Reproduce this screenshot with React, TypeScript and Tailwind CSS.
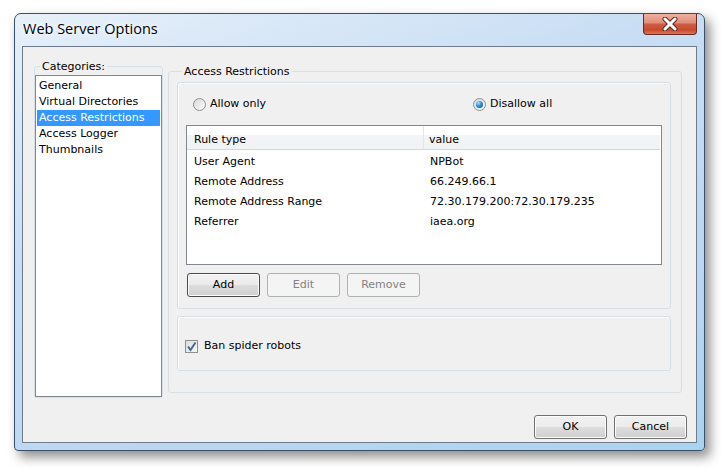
import React from 'react';

const categories = ['General', 'Virtual Directories', 'Access Restrictions', 'Access Logger', 'Thumbnails'];

const rules = [
  { type: 'User Agent', value: 'NPBot' },
  { type: 'Remote Address', value: '66.249.66.1' },
  { type: 'Remote Address Range', value: '72.30.179.200:72.30.179.235' },
  { type: 'Referrer', value: 'iaea.org' },
];

const Radio = ({ checked, label }: { checked?: boolean; label: string }) => (
  <div className="flex items-center h-[14px]">
    <span className="w-[13px] h-[13px] rounded-full border border-[#8e8f8f] bg-gradient-to-br from-[#d9d9d9] to-[#fbfbfb] flex items-center justify-center">
      {checked && (
        <span className="w-[7px] h-[7px] rounded-full bg-[radial-gradient(circle_at_35%_30%,#a9dcff_0%,#2b8ee0_45%,#0b3f86_100%)]" />
      )}
    </span>
    <span className="ml-[4px]">{label}</span>
  </div>
);

const Button = ({ label, disabled, strong }: { label: string; disabled?: boolean; strong?: boolean }) => (
  <button
    disabled={disabled}
    className={
      disabled
        ? 'w-[73px] h-[24px] rounded-[3px] border border-[#adb2b5] bg-[#f4f4f4] text-[#838383]'
        : strong
          ? 'w-[73px] h-[24px] rounded-[3px] border border-[#4a4a4a] bg-[linear-gradient(to_bottom,#f2f2f2_0%,#ebebeb_50%,#dddddd_51%,#cfcfcf_100%)] shadow-[inset_0_0_0_1px_#fcfcfc] text-black'
          : 'w-[73px] h-[24px] rounded-[3px] border border-[#707070] bg-[linear-gradient(to_bottom,#f2f2f2_0%,#ebebeb_50%,#dddddd_51%,#cfcfcf_100%)] shadow-[inset_0_0_0_1px_#fcfcfc] text-black'
    }
  >
    {label}
  </button>
);

export default function App() {
  return (
    <div className="w-[722px] h-[469px] bg-white pt-[13px] pl-[14px] text-[11px] text-black font-['DejaVu_Sans',sans-serif]">
      <div className="w-[691px] h-[438px] rounded-t-[7px] rounded-b-[4px] border border-[#3b5068] bg-[linear-gradient(160deg,#e6f0fa_0%,#c9def4_35%,#bdd7f1_70%,#a9d3f0_100%)] shadow-[5px_6px_12px_rgba(0,0,0,0.45)] flex flex-col">
        {/* title bar */}
        <div className="h-[32px] flex items-start justify-between">
          <div className="mt-[6px] ml-[8px] text-[14.5px] font-['Open_Sans',sans-serif] leading-[18px] [text-shadow:0_0_8px_#ffffff,0_0_4px_#ffffff]">
            Web Server Options
          </div>
          <div className="mr-[7px] w-[54px] h-[21px] rounded-b-[4px] border border-t-0 border-[#6b2a1e] bg-[linear-gradient(to_bottom,#eeb0a0_0%,#e08d78_45%,#cf5d44_50%,#c8492f_80%,#d8765c_100%)] flex items-center justify-center">
            <svg width="18" height="14" viewBox="0 0 18 14">
              <path d="M4 2 L14 12 M14 2 L4 12" stroke="#5a2b24" strokeWidth="5" strokeLinecap="round" />
              <path d="M4 2 L14 12 M14 2 L4 12" stroke="#ffffff" strokeWidth="3" strokeLinecap="round" />
            </svg>
          </div>
        </div>

        {/* client area */}
        <div className="flex-1 mx-[7px] mb-[7px] border border-[#6f7b8b] bg-[#f0f0f0] flex flex-col">
          <div className="flex items-start">
            <fieldset className="ml-[11px] mt-[12px] w-[129px] border border-[#d5dfe5] rounded-[3px]">
              <legend className="ml-[5px] px-[2px] leading-[14px] pt-[1px]">Categories:</legend>
              <div className="mt-[1px] h-[322px] border border-[#828790] bg-white pt-[2px] px-[1px]">
                {categories.map((c) => (
                  <div
                    key={c}
                    className={
                      c === 'Access Restrictions'
                        ? 'h-[16px] leading-[16px] pl-[2px] bg-[#3399ff] text-white'
                        : 'h-[16px] leading-[16px] pl-[2px]'
                    }
                  >
                    {c}
                  </div>
                ))}
              </div>
            </fieldset>

            <fieldset className="ml-[5px] mt-[17px] w-[514px] border border-[#d5dfe5] rounded-[3px] pl-[8px] pr-[10px] pb-[21px]">
              <legend className="ml-[5px] px-[2px] leading-[14px] pt-[1px]">Access Restrictions</legend>
              <div className="mt-[3px] border border-[#d5dfe5] rounded-[3px] shadow-[inset_1px_1px_0_#ffffff] px-[8px] pt-[14px] pb-[11px]">
                <div className="flex ml-[7px]">
                  <div className="w-[280px]">
                    <Radio label="Allow only" />
                  </div>
                  <Radio checked label="Disallow all" />
                </div>

                <div className="mt-[14px] h-[140px] border border-[#828790] bg-white">
                  <div className="flex h-[24px] mr-[1px] border-b border-[#d5d8de] bg-[linear-gradient(to_bottom,#ffffff_0%,#ffffff_40%,#f3f4f6_41%,#f1f2f4_100%)]">
                    <div className="w-[237px] pl-[7px] pt-[6px] flex items-center border-r border-[#e3e5e9]">Rule type</div>
                    <div className="flex-1 pl-[5px] pt-[6px] flex items-center">value</div>
                  </div>
                  <div className="pt-[2px]">
                    {rules.map((r) => (
                      <div key={r.type} className="flex h-[20px] items-center">
                        <div className="w-[237px] pl-[7px]">{r.type}</div>
                        <div className="flex-1 pl-[6px]">{r.value}</div>
                      </div>
                    ))}
                  </div>
                </div>

                <div className="mt-[8px] ml-[1px] flex gap-[7px]">
                  <Button label="Add" strong />
                  <Button label="Edit" disabled />
                  <Button label="Remove" disabled />
                </div>
              </div>

              <div className="mt-[7px] h-[55px] border border-[#d5dfe5] rounded-[3px] shadow-[inset_1px_1px_0_#ffffff] pl-[7px] pt-[22px]">
                <div className="flex items-center h-[14px]">
                  <span className="w-[13px] h-[13px] border border-[#8f8f8f] bg-gradient-to-br from-[#dcdcdc] to-[#fafafa] flex items-center justify-center">
                    <svg width="11" height="11" viewBox="0 0 11 11">
                      <path d="M2 5.5 L4.5 9 L9.5 1.5" fill="none" stroke="#46698f" strokeWidth="2" />
                    </svg>
                  </span>
                  <span className="ml-[6px]">Ban spider robots</span>
                </div>
              </div>
            </fieldset>
          </div>

          <div className="mt-[17px] mr-[9px] flex justify-end gap-[7px]">
            <Button label="OK" />
            <Button label="Cancel" />
          </div>
        </div>
      </div>
    </div>
  );
}
